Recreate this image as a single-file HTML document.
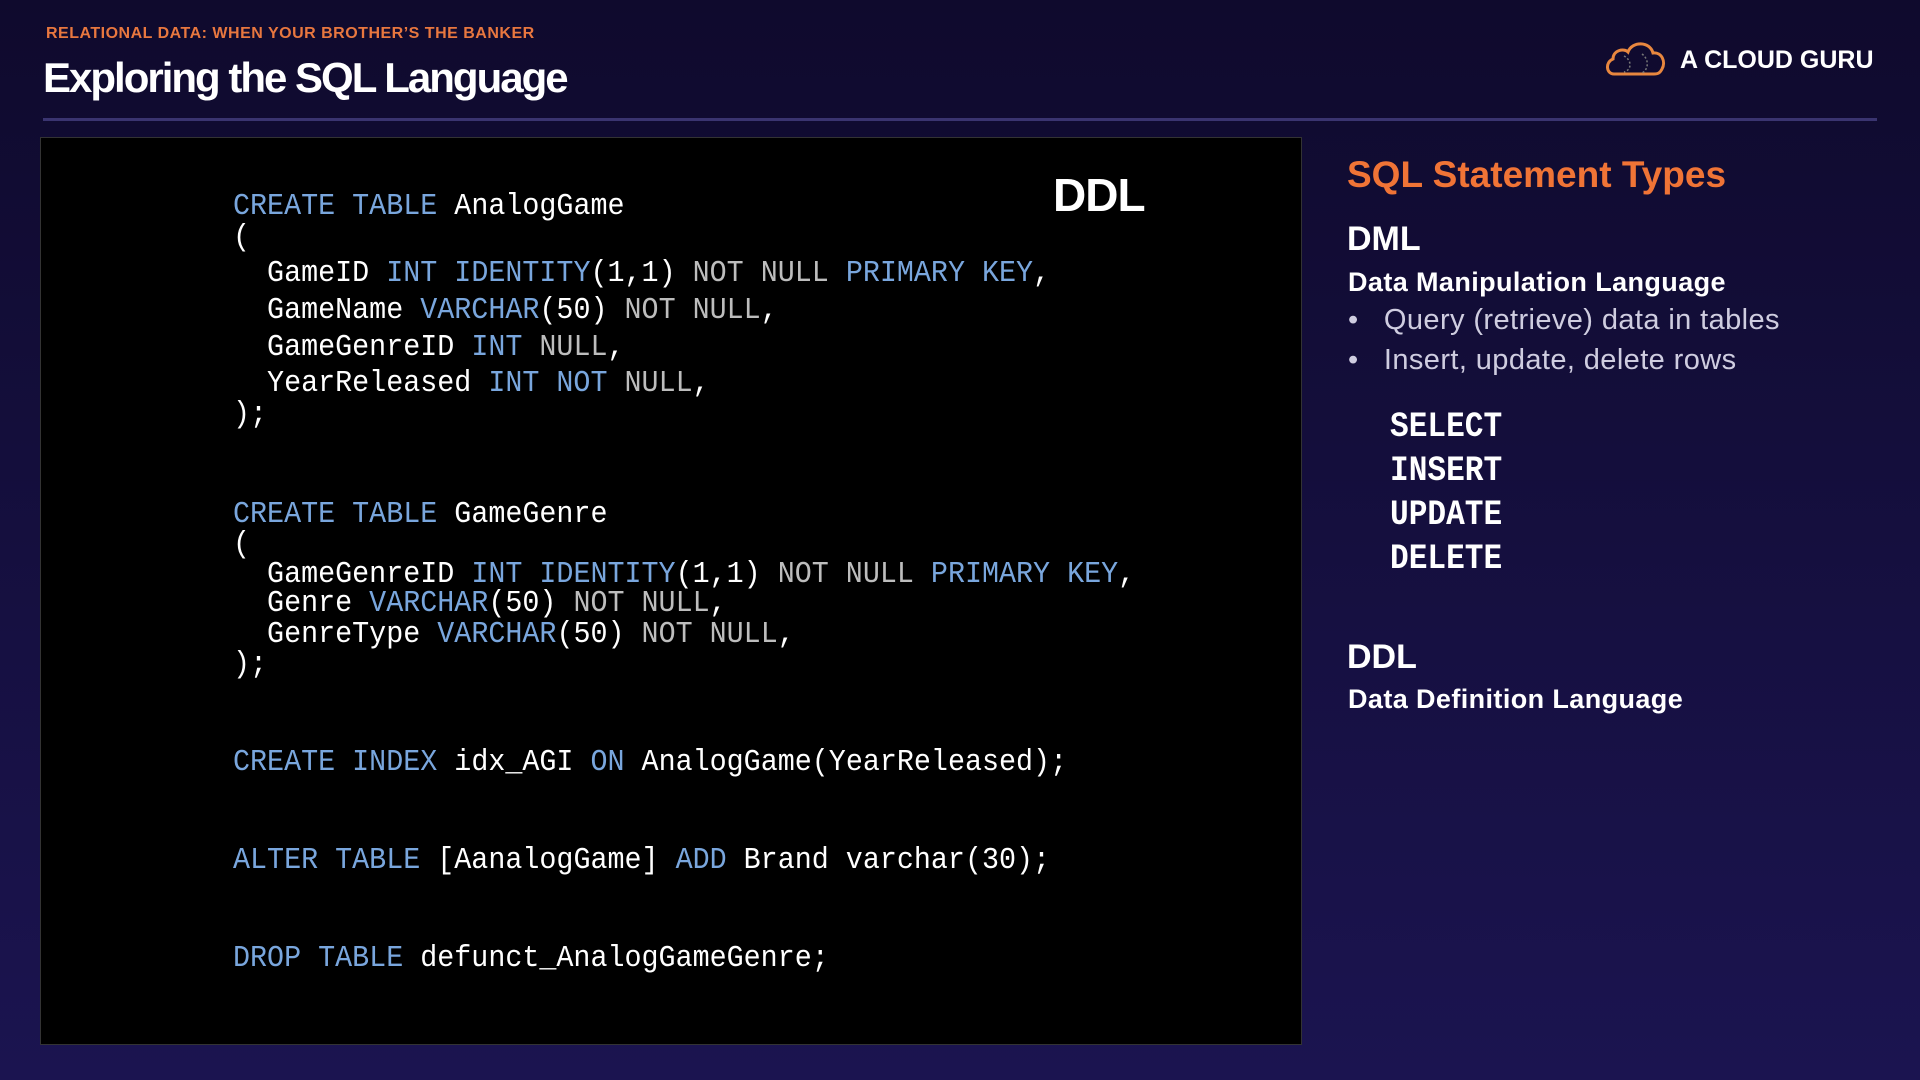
<!DOCTYPE html>
<html><head><meta charset="utf-8"><style>
body{margin:0;width:1920px;height:1080px;overflow:hidden;background:linear-gradient(#0f0a2d,#1b1450);font-family:"Liberation Sans",sans-serif;position:relative}
.a{position:absolute;white-space:nowrap}
.sub{left:46px;top:25px;font-size:16px;font-weight:bold;color:#e8773f;letter-spacing:0.5px}
.title{left:43px;top:54px;font-size:42px;font-weight:bold;color:#fff;letter-spacing:-2px}
.hr{left:43px;top:118px;width:1834px;height:3px;background:#3a3470}
.box{left:40px;top:137px;width:1260px;height:906px;background:#000;border:1px solid #333}
.code{font-family:"Liberation Mono",monospace;font-size:31px;color:#fff;transform:scaleX(0.915);transform-origin:left center;line-height:40px;left:233px}
.k{color:#79a6dd}.g{color:#bdbdbd}
.ddl{left:1053px;top:168px;font-size:46px;font-weight:bold;color:#fff;letter-spacing:-1px}
.h1{left:1347px;top:154px;font-size:37px;font-weight:bold;color:#f07436}
.h2{left:1347px;top:220px;font-size:34px;font-weight:bold;color:#fff}
.h3{font-size:27px;font-weight:bold;color:#fff;left:1348px;letter-spacing:0.4px}
.b{font-size:29px;color:#cfcde0;left:1348px;letter-spacing:0.4px}
.m{font-family:"Liberation Mono",monospace;font-size:35px;color:#fff;left:1390px;transform:scaleX(0.89);transform-origin:left center;line-height:40px;font-weight:bold}
.logo{left:1680px;top:46px;font-size:25px;font-weight:bold;color:#fff}
</style></head><body>
<div class="a sub">RELATIONAL DATA: WHEN YOUR BROTHER’S THE BANKER</div>
<div class="a title">Exploring the SQL Language</div>
<svg class="a" style="left:1604px;top:38px" width="64" height="40" viewBox="0 0 64 40"><path d="M10 36 C2 36 1 24 9 21 C9 12 20 10 24 14 C28 3 46 3 49 15 C58 14 62 24 58 31 C56 35 54 36 50 36 Z" fill="none" stroke="#e8873f" stroke-width="3"/><path d="M20 18 C28 22 28 32 20 34 M38 16 C46 22 44 32 38 35" fill="none" stroke="#777" stroke-width="1.5" stroke-dasharray="2 2"/></svg>
<div class="a logo">A CLOUD GURU</div>
<div class="a hr"></div>
<div class="a box"></div>
<div class="a code" style="top:187px"><span class="k">CREATE TABLE</span> AnalogGame</div>
<div class="a code" style="top:218px">(</div>
<div class="a code" style="top:254px">&nbsp;&nbsp;GameID <span class="k">INT IDENTITY</span>(1,1) <span class="g">NOT NULL</span> <span class="k">PRIMARY KEY</span>,</div>
<div class="a code" style="top:291px">&nbsp;&nbsp;GameName <span class="k">VARCHAR</span>(50) <span class="g">NOT NULL</span>,</div>
<div class="a code" style="top:328px">&nbsp;&nbsp;GameGenreID <span class="k">INT</span> <span class="g">NULL</span>,</div>
<div class="a code" style="top:364px">&nbsp;&nbsp;YearReleased <span class="k">INT NOT</span> <span class="g">NULL</span>,</div>
<div class="a code" style="top:395px">);</div>
<div class="a code" style="top:495px"><span class="k">CREATE TABLE</span> GameGenre</div>
<div class="a code" style="top:525px">(</div>
<div class="a code" style="top:555px">&nbsp;&nbsp;GameGenreID <span class="k">INT IDENTITY</span>(1,1) <span class="g">NOT NULL</span> <span class="k">PRIMARY KEY</span>,</div>
<div class="a code" style="top:584px">&nbsp;&nbsp;Genre <span class="k">VARCHAR</span>(50) <span class="g">NOT NULL</span>,</div>
<div class="a code" style="top:615px">&nbsp;&nbsp;GenreType <span class="k">VARCHAR</span>(50) <span class="g">NOT NULL</span>,</div>
<div class="a code" style="top:645px">);</div>
<div class="a code" style="top:743px"><span class="k">CREATE INDEX</span> idx_AGI <span class="k">ON</span> AnalogGame(YearReleased);</div>
<div class="a code" style="top:841px"><span class="k">ALTER TABLE</span> [AanalogGame] <span class="k">ADD</span> Brand varchar(30);</div>
<div class="a code" style="top:939px"><span class="k">DROP TABLE</span> defunct_AnalogGameGenre;</div>
<div class="a ddl">DDL</div>
<div class="a h1">SQL Statement Types</div>
<div class="a h2">DML</div>
<div class="a h3" style="top:267px">Data Manipulation Language</div>
<div class="a b" style="top:304px">•&nbsp;&nbsp;&nbsp;Query (retrieve) data in tables</div>
<div class="a b" style="top:344px">•&nbsp;&nbsp;&nbsp;Insert, update, delete rows</div>
<div class="a m" style="top:407px">SELECT</div>
<div class="a m" style="top:451px">INSERT</div>
<div class="a m" style="top:495px">UPDATE</div>
<div class="a m" style="top:539px">DELETE</div>
<div class="a h2" style="top:638px">DDL</div>
<div class="a h3" style="top:684px">Data Definition Language</div>
</body></html>
